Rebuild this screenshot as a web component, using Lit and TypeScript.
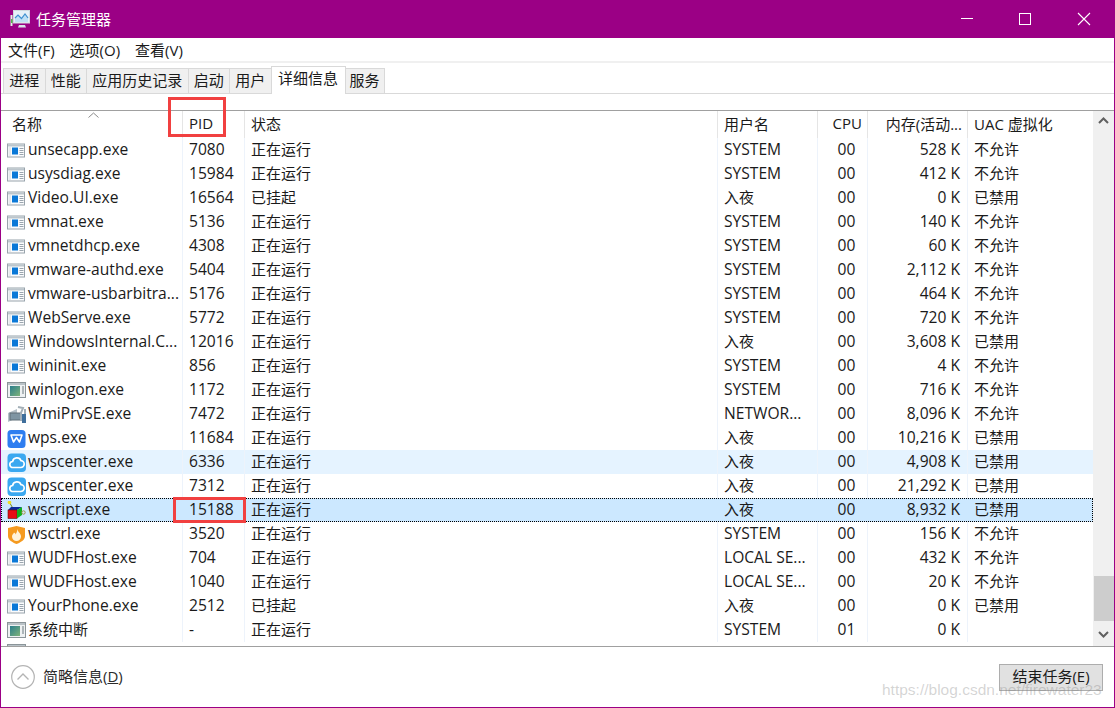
import { LitElement, html, css, svg } from "lit";
import { customElement } from "lit/decorators.js";

type Row = [string, string, string, string, string, string, string, string];
const rows: Row[] = [
  ["app", "unsecapp.exe", "7080", "正在运行", "SYSTEM", "00", "528 K", "不允许"],
  ["app", "usysdiag.exe", "15984", "正在运行", "SYSTEM", "00", "412 K", "不允许"],
  ["app", "Video.UI.exe", "16564", "已挂起", "入夜", "00", "0 K", "已禁用"],
  ["app", "vmnat.exe", "5136", "正在运行", "SYSTEM", "00", "140 K", "不允许"],
  ["app", "vmnetdhcp.exe", "4308", "正在运行", "SYSTEM", "00", "60 K", "不允许"],
  ["app", "vmware-authd.exe", "5404", "正在运行", "SYSTEM", "00", "2,112 K", "不允许"],
  ["app", "vmware-usbarbitra...", "5176", "正在运行", "SYSTEM", "00", "464 K", "不允许"],
  ["app", "WebServe.exe", "5772", "正在运行", "SYSTEM", "00", "720 K", "不允许"],
  ["app", "WindowsInternal.C...", "12016", "正在运行", "入夜", "00", "3,608 K", "已禁用"],
  ["app", "wininit.exe", "856", "正在运行", "SYSTEM", "00", "4 K", "不允许"],
  ["sys", "winlogon.exe", "1172", "正在运行", "SYSTEM", "00", "716 K", "不允许"],
  ["wmi", "WmiPrvSE.exe", "7472", "正在运行", "NETWOR...", "00", "8,096 K", "不允许"],
  ["wps", "wps.exe", "11684", "正在运行", "入夜", "00", "10,216 K", "已禁用"],
  ["cloud", "wpscenter.exe", "6336", "正在运行", "入夜", "00", "4,908 K", "已禁用"],
  ["cloud", "wpscenter.exe", "7312", "正在运行", "入夜", "00", "21,292 K", "已禁用"],
  ["script", "wscript.exe", "15188", "正在运行", "入夜", "00", "8,932 K", "已禁用"],
  ["fire", "wsctrl.exe", "3520", "正在运行", "SYSTEM", "00", "156 K", "不允许"],
  ["app", "WUDFHost.exe", "704", "正在运行", "LOCAL SE...", "00", "432 K", "不允许"],
  ["app", "WUDFHost.exe", "1040", "正在运行", "LOCAL SE...", "00", "20 K", "不允许"],
  ["app", "YourPhone.exe", "2512", "已挂起", "入夜", "00", "0 K", "已禁用"],
  ["sys", "系统中断", "-", "正在运行", "SYSTEM", "01", "0 K", ""],
];

const icons: Record<string, unknown> = {
  app: svg`<rect x=".5" y="3" width="17" height="13" fill="#fbfcfd" stroke="#98a3ab"/><rect x="1" y="3.500" width="16" height="2" fill="#bcc5cc"/><rect x="5" y="6.500" width="6" height="7" fill="#0a78d7"/><rect x="1.500" y="6" width="2.500" height="9" fill="#e6eaed"/><path d="M12.500 7.500h4M12.500 9.500h4M12.500 11.500h4M12.500 13.500h4" stroke="#9aa5ae"/>`,
  sys: svg`<rect x=".5" y="1.500" width="18" height="15" fill="#eef1f2" stroke="#8b9599"/><rect x="1" y="2" width="17" height="2" fill="#b9c2c7"/><defs><linearGradient id="sg" x1="0" y1="0" x2="1" y2="1"><stop offset="0" stop-color="#2a7d8c"/><stop offset="1" stop-color="#7eb37a"/></linearGradient></defs><rect x="3" y="5" width="10" height="10" fill="url(#sg)"/><path d="M15 6h2M15 8h2M15 10h2M15 12h2" stroke="#6c7a80"/>`,
  wmi: svg`<path d="M1 8l9-4v9l-9 4z" fill="#b4c0c8"/><rect x="3" y="8" width="11" height="7" fill="#7e95a3" stroke="#5f6e78"/><path d="M11 2l5 1-2 5v7h4V4" fill="none" stroke="#a3afb7" stroke-width="2"/><rect x="15" y="9" width="4" height="9" fill="#3f6f9c"/>`,
  wps: svg`<rect x=".5" y="1" width="18" height="18" rx="3.500" fill="#2f7ef0"/><path d="M4 6h11L12.500 13 9.500 8.500 6.500 13z" fill="none" stroke="#fff" stroke-width="1.600" stroke-linejoin="round"/>`,
  cloud: svg`<rect x=".5" y=".5" width="18.500" height="18.500" rx="4" fill="#3aa8f0"/><path d="M6 14.500a3 3 0 0 1-.4-6 4.400 4.400 0 0 1 8.400-.8 3.400 3.400 0 0 1-.4 6.800z" fill="none" stroke="#fff" stroke-width="1.700" stroke-linejoin="round"/>`,
  script: svg`<path d="M2.500 1.500l3 5" stroke="#7a8a20"/><circle cx="2.500" cy="1.500" r="1.800" fill="#f0e020"/><path d="M1 9l3-3h11l-5 3z" fill="#0a2a9a"/><rect x="1" y="9" width="9" height="8.500" fill="#e80c14" stroke="#6a0a0a" stroke-width=".6"/><path d="M10 9l5-3v8l-5 3.500z" fill="#10b020"/><circle cx="16.500" cy="11.500" r="1.700" fill="none" stroke="#a09040"/>`,
  fire: svg`<path d="M1 3 9.500 1 18 3v8c0 4-4.500 6.500-8.500 8C5.500 17.500 1 15 1 11z" fill="#f59a1f"/><path d="M10 4c1 3 4 4.500 4 7.500a4.500 4.500 0 0 1-4.500 4.500A4.500 4.500 0 0 1 5 11.500C5 9.500 6.500 9 7 7.500c1 .5 1.500 1 1.500 2 1-1.500 2-3.500 1.500-5.500z" fill="#fff3dc"/>`,
};

const isCjk = (s: string) => /[^\x00-\x7f]/.test(s);

@customElement("app-root")
export class AppRoot extends LitElement {
  static styles = css`
    :host { display: block; width: 1115px; height: 708px; overflow: hidden; background: #fff;
      font-family: "Open Sans", "Noto Sans CJK SC", sans-serif; font-size: 15.600px; color: #1a1a1a; }
    .win { position: relative; display: flex; flex-direction: column; box-sizing: border-box; width: 1115px; height: 708px;
      border: 1px solid #9b0085; border-top: 0; background: #fff; }
    .title { display: flex; align-items: center; height: 38px; flex: none; background: #9b0085; color: #fff; padding: 0 2px 0 10px; margin: 0 -1px; }
    .title .name { margin-left: 6px; font-size: 15px; padding-bottom: 1px; }
    .title .logo { width: 20px; height: 18px; }
    .ctrls { margin-left: auto; display: flex; }
    .ctrls svg { width: 58px; height: 38px; display: block; }
    .menu { display: flex; flex: none; height: 23px; padding-left: 7px; align-items: center; gap: 15px; font-size: 15px; border-bottom: 2px solid #f0f0f0; }
    .tabs { display: flex; height: 30px; flex: none; align-items: flex-end; padding-left: 2px; border-bottom: 1px solid #d9d9d9; }
    .tab { box-sizing: border-box; height: 25px; padding: 0 5.250px 3px; display: flex; align-items: center; font-size: 15px; background: #f0f0f0; border: 1px solid #d9d9d9; border-bottom: 0; margin-left: -1px; }
    .tab:first-child { margin-left: 0; }
    .tab.on { background: #fff; padding: 0 6.500px 6px; margin-bottom: -1px; height: 28px; position: relative; z-index: 1; }
    .tab.last { padding: 0 4px 3px; }
    .gap { height: 16px; flex: none; border-bottom: 1px solid #a0a0a0; }
    .body { flex: 1; min-height: 0; display: flex; overflow: hidden; border-bottom: 1px solid #a0a0a0; }
    .table { flex: 1; min-width: 0; overflow: hidden; }
    .r { display: grid; grid-template-columns: 182px 62px 473px 100px 50px 100px 125px; height: 24px; align-items: stretch; }
    .r > div { display: flex; align-items: center; padding: 0 6px 2px 6px; box-sizing: border-box; white-space: nowrap; overflow: hidden; border-right: 1px solid #edf3fb; }
    .r > div.cjk { font-size: 15px; padding-bottom: 4px; }
    .r > div:last-child { border-right: 0; }
    .r > div.rt { justify-content: flex-end; padding-right: 7px; }
    .r > div.ct { justify-content: center; padding: 0 0 2px 8px; }
    .r > div.nm { padding: 0 0 0 6px; }
    .nm .ic { width: 19px; height: 19px; flex: none; margin-right: 2px; }
    .nm .txt { padding-bottom: 2px; }
    .nm .ctext { font-size: 15px; padding-bottom: 4px; }
    .hd { height: 27px; }
    .hd > div { border-right-color: #e5e5e5; position: relative; font-size: 15px; padding-bottom: 3px; }
    .r.hd > div.cjk { padding-bottom: 2px; }
    .r.hd > div.nm { padding: 0 0 3px 11px; overflow: visible; }
    .r.hd > div.hr { justify-content: flex-end; padding-right: 5px; }
    .arrow { position: absolute; left: 87px; top: 1px; width: 11px; height: 6px; }
    .hover { background: #e5f3ff; }
    .sel { background: #cce8ff; outline: 1px dotted #000; outline-offset: -1px; }
    .sel > div { border-right-color: transparent !important; }
    .clip { height: 4px; display: flex; align-items: flex-start; padding: 1px 0 0 6px; box-sizing: border-box; overflow: hidden; }
    .clip svg { width: 19px; height: 19px; flex: none; }
    .sb { width: 21px; flex: none; background: #f0f0f0; display: flex; flex-direction: column; align-items: center; position: relative; }
    .sb svg { width: 21px; height: 17px; flex: none; }
    .sb .top { margin-top: 2px; }
    .sb .bot { margin-top: auto; margin-bottom: 3px; }
    .thumb { position: absolute; left: 1px; right: 0; top: 465px; height: 45px; background: #cdcdcd; }
    .foot { flex: none; height: 60px; display: flex; align-items: center; padding: 0 11px 0 10px; font-size: 15px; }
    .more { display: flex; align-items: center; gap: 8px; color: #2b2b2b; }
    .more svg { width: 24px; height: 24px; }
    .more .lbl { padding-bottom: 3px; }
    .u { text-decoration: underline; }
    .btn { margin-left: auto; box-sizing: border-box; width: 104px; height: 27px; padding-bottom: 3px; display: flex; align-items: center; justify-content: center; background: #e1e1e1; border: 1px solid #adadad; font-size: 15px; }
    .mark { position: absolute; border: 3px solid #f14040; box-sizing: border-box; pointer-events: none; z-index: 2; }
    .m1 { left: 167px; top: 97px; width: 58px; height: 40px; }
    .m2 { left: 172px; top: 497px; width: 73px; height: 26px; }
    .wm { position: absolute; left: 881px; top: 681px; font-family: "Liberation Sans", sans-serif; font-size: 15.500px; color: rgba(130,130,130,.34); white-space: nowrap; pointer-events: none; z-index: 2; }
  `;

  private row(r: Row, cls = "") {
    const cell = (s: string) => html`<div class="${isCjk(s) ? "cjk" : ""}">${s}</div>`;
    return html`<div class="r ${cls}">
      <div class="nm"><svg class="ic" viewBox="0 0 19 19">${icons[r[0]]}</svg><span class="${isCjk(r[1]) ? "ctext" : "txt"}">${r[1]}</span></div>
      <div>${r[2]}</div>${cell(r[3])}${cell(r[4])}
      <div class="ct">${r[5]}</div><div class="rt">${r[6]}</div>${cell(r[7])}
    </div>`;
  }

  render() {
    return html`<div class="win">
      <div class="title">
        <svg class="logo" viewBox="0 0 20 18">
          <rect x="3.500" y=".5" width="16" height="12.500" fill="#e6f0f8" stroke="#cfd8de"/>
          <path d="M5 8l3-3 3.500 3.500L15 4l3 4v4H5z" fill="#bfe0f5"/>
          <path d="M5 8l3-3 3.500 3.500L15 4l3 4" fill="none" stroke="#3f8fd0" stroke-width="1.200"/>
          <rect x=".5" y="5" width="2" height="11" fill="#e4efe4"/>
          <rect x="1" y="9" width="1.500" height="4" fill="#4cc04c"/>
          <path d="M9 15h6l1 2.500H8z" fill="#d8e2e8"/>
        </svg>
        <span class="name">任务管理器</span>
        <div class="ctrls">
          <svg viewBox="0 0 58 38"><path d="M22 18.500h12" stroke="#fff"/></svg>
          <svg viewBox="0 0 58 38"><rect x="22.500" y="13.500" width="11" height="11" fill="none" stroke="#fff"/></svg>
          <svg viewBox="0 0 58 38"><path d="M23 13l12 12M35 13L23 25" stroke="#fff" stroke-width="1.100"/></svg>
        </div>
      </div>
      <div class="menu"><span>文件(F)</span><span>选项(O)</span><span>查看(V)</span></div>
      <div class="tabs">
        ${["进程", "性能", "应用历史记录", "启动", "用户"].map((t) => html`<div class="tab">${t}</div>`)}
        <div class="tab on">详细信息</div>
        <div class="tab last">服务</div>
      </div>
      <div class="gap"></div>
      <div class="body">
        <div class="table">
          <div class="r hd">
            <div class="nm">名称<svg class="arrow" viewBox="0 0 11 6"><path d="M.5 5.500 5.500 1l5 4.500" fill="none" stroke="#8a8a8a"/></svg></div>
            <div>PID</div><div class="cjk">状态</div><div class="cjk">用户名</div>
            <div class="hr">CPU</div><div class="hr">内存(活动...</div><div class="cjk">UAC 虚拟化</div>
          </div>
          ${rows.map((r, i) => this.row(r, i === 13 ? "hover" : i === 15 ? "sel" : ""))}
          <div class="clip"><svg viewBox="0 0 19 19">${icons.sys}</svg></div>
        </div>
        <div class="sb">
          <svg class="top" viewBox="0 0 21 17"><path d="M6 10l4.500-4.500L15 10" fill="none" stroke="#606060" stroke-width="2"/></svg>
          <div class="thumb"></div>
          <svg class="bot" viewBox="0 0 21 17"><path d="M6 6l4.500 4.500L15 6" fill="none" stroke="#606060" stroke-width="2"/></svg>
        </div>
      </div>
      <div class="foot">
        <div class="more">
          <svg viewBox="0 0 24 24"><circle cx="12" cy="12" r="11.300" fill="#fff" stroke="#b4b4b4" stroke-width="1.200"/><path d="M6.500 14.500 12 9l5.500 5.500" fill="none" stroke="#b4b4b4" stroke-width="1.400"/></svg>
          <span class="lbl">简略信息(<span class="u">D</span>)</span>
        </div>
        <div class="btn">结束任务(E)</div>
      </div>
      <div class="mark m1"></div>
      <div class="mark m2"></div>
      <div class="wm">https://blog.csdn.net/firewater23</div>
    </div>`;
  }
}
